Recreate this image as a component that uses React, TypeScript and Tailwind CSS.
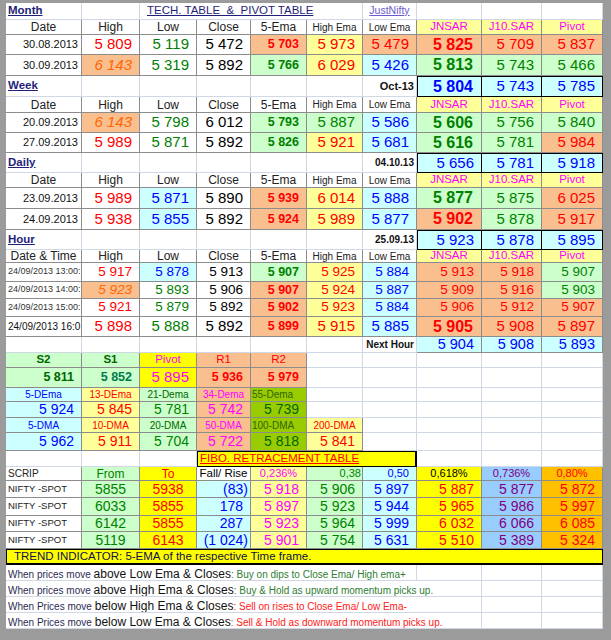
import type { ReactNode } from 'react';
import { twMerge } from 'tailwind-merge';

const COLS = 'grid grid-cols-[76px_58px_57px_54px_56px_56px_54px_65px_60px_61px]';

// borders
const T = 'border-[#8c8c8c]';
const BOX = 'border-black border-t';

// text styles
const NUM = 'justify-end pr-[7px] text-[15px]';
const SM = 'justify-end pr-[7px] text-[13.5px]';
const EMA = 'justify-end pr-[7px] text-[12.5px] font-bold';
const BIG = 'justify-end pr-[8px] text-[16px] font-bold';
const DV = 'justify-end pr-[7px] text-[14px]';
const FV = 'justify-end pr-[7px] text-[14px]';
const FC = 'justify-center text-[14px]';
const HD = 'justify-center text-[12px] text-[#222]';
const HDS = 'justify-center text-[10px] text-[#222]';
const SAR = 'justify-center text-[11.5px] text-[#ff00ff] bg-[#ffff99]';
const DATE = 'justify-end pr-[3px] text-[11px] text-[#111]';
const TIME = 'justify-start pl-[2px] text-[9px] text-[#333]';
const TITLE = 'pl-[2px] text-[11.5px] font-bold underline text-[#1f1f7a]';
const STAMP = 'justify-end pr-[2px] text-[10px] font-bold text-[#111]';
const LAB = 'justify-center text-[11.5px]';
const DL = 'justify-center text-[10px]';
const FH = 'justify-center text-[11px]';
const SPOT = 'justify-start pl-[2px] text-[9.5px] text-[#222]';

// colours
const R = 'text-[#ff0000]';
const GR = 'text-[#008000]';
const DG = 'text-[#006600]';
const BL = 'text-[#0000ff]';
const K = 'text-black';
const OR = 'text-[#ff6600] italic';
const MG = 'text-[#ff00ff]';
const PU = 'text-[#800080]';

const PC = 'bg-[#fabf8f]';
const LG = 'bg-[#ccffcc]';
const LY = 'bg-[#ffff99]';
const CY = 'bg-[#ccffff]';
const YE = 'bg-[#ffff00]';
const OL = 'bg-[#99cc00]';
const LB = 'bg-[#99ccff]';
const GO = 'bg-[#ffc000]';

type Spec = [ReactNode, string];

function Cell({ children, className }: { children?: ReactNode; className?: string }) {
  return (
    <div
      className={twMerge(
        'flex items-center overflow-hidden whitespace-nowrap border-r border-b border-[#d0d7e5] leading-none',
        className
      )}
    >
      {children}
    </div>
  );
}

function Line({ h, cells }: { h: string; cells: Spec[] }) {
  return (
    <div className={twMerge(COLS, h)}>
      {cells.map(([t, c], i) => (
        <Cell key={i} className={c}>
          {t}
        </Cell>
      ))}
    </div>
  );
}

function Header({ h, first }: { h: string; first: string }) {
  return (
    <Line
      h={h}
      cells={[
        [first, `${T} ${HD}`],
        ['High', `${T} ${HD}`],
        ['Low', `${T} ${HD}`],
        ['Close', `${T} ${HD}`],
        ['5-Ema', `${T} ${HD}`],
        ['High Ema', `${T} ${HDS}`],
        ['Low Ema', `${T} ${HDS}`],
        ['JNSAR', `${T} ${SAR}`],
        ['J10.SAR', `${T} ${SAR}`],
        ['Pivot', `${T} ${SAR}`],
      ]}
    />
  );
}

const empty = (n: number): Spec[] => Array.from({ length: n }, () => ['', ''] as Spec);

function Advice({
  lead,
  cond,
  rest,
  tone,
  wide,
}: {
  lead: string;
  cond: string;
  rest: string;
  tone: string;
  wide?: boolean;
}) {
  return (
    <div className={twMerge(COLS, 'h-[16px]')}>
      <Cell className={wide ? 'col-span-8 pl-[2px]' : 'col-span-7 pl-[2px]'}>
        <span>
          <span className="text-[10px] text-[#2b2b55]">{lead} </span>
          <span className="text-[12px] text-[#111]">{cond}</span>
          <span className={`text-[10px] ${tone}`}>{rest}</span>
        </span>
      </Cell>
      {!wide && <Cell />}
      <Cell />
      <Cell />
    </div>
  );
}

export default function App() {
  return (
    <div className="w-[611px] h-[640px] overflow-hidden bg-[#9b9b9b] pl-[6px] pt-[3px] font-['Liberation_Sans',Arial,sans-serif]">
      <div className="w-[597px] bg-white">
        {/* Month */}
        <div className={twMerge(COLS, 'h-[17px]')}>
          <Cell className={TITLE}>Month</Cell>
          <Cell />
          <Cell className="col-span-4 pl-[7px] whitespace-pre text-[11.5px] underline text-[#1f1f7a]">
            {'TECH. TABLE  &  PIVOT TABLE'}
          </Cell>
          <Cell className="justify-center text-[10.5px] underline text-[#6a5acd]">JustNifty</Cell>
          <Cell />
          <Cell />
          <Cell />
        </div>
        <Header h="h-[15px]" first="Date" />
        <Line
          h="h-[20px]"
          cells={[
            ['30.08.2013', `${T} ${DATE}`],
            ['5 809', `${T} ${NUM} ${R}`],
            ['5 119', `${T} ${NUM} ${GR}`],
            ['5 472', `${T} ${NUM} ${K}`],
            ['5 703', `${T} ${EMA} ${R} ${PC}`],
            ['5 973', `${T} ${NUM} ${R} ${LY}`],
            ['5 479', `${T} ${NUM} ${R} ${PC}`],
            ['5 825', `${T} ${BIG} ${R} ${PC}`],
            ['5 709', `${T} ${NUM} ${R} ${PC}`],
            ['5 837', `${T} ${NUM} ${R} ${PC}`],
          ]}
        />
        <Line
          h="h-[21px]"
          cells={[
            ['30.09.2013', `${T} ${DATE}`],
            ['6 143', `${T} ${NUM} ${OR} ${PC}`],
            ['5 319', `${T} ${NUM} ${GR}`],
            ['5 892', `${T} ${NUM} ${K}`],
            ['5 766', `${T} ${EMA} ${GR} ${LG}`],
            ['6 029', `${T} ${NUM} ${R} ${LY}`],
            ['5 426', `${T} ${NUM} ${BL} ${CY}`],
            ['5 813', `${T} ${BIG} ${GR} ${LG}`],
            ['5 743', `${T} ${NUM} ${GR} ${LG}`],
            ['5 466', `${T} ${NUM} ${GR} ${LG}`],
          ]}
        />

        {/* Week */}
        <Line
          h="h-[21px]"
          cells={[
            ['Week', TITLE],
            ...empty(5),
            ['Oct-13', 'justify-end pr-[2px] text-[11px] font-bold text-[#111]'],
            ['5 804', `${BOX} border-l ${BIG} ${BL} ${CY}`],
            ['5 743', `${BOX} ${NUM} ${BL} ${CY}`],
            ['5 785', `${BOX} ${NUM} ${BL} ${CY}`],
          ]}
        />
        <Header h="h-[16px]" first="Date" />
        <Line
          h="h-[20px]"
          cells={[
            ['20.09.2013', `${T} ${DATE}`],
            ['6 143', `${T} ${NUM} ${OR} ${PC}`],
            ['5 798', `${T} ${NUM} ${GR}`],
            ['6 012', `${T} ${NUM} ${K}`],
            ['5 793', `${T} ${EMA} ${GR} ${LG}`],
            ['5 887', `${T} ${NUM} ${GR} ${LG}`],
            ['5 586', `${T} ${NUM} ${BL} ${CY}`],
            ['5 606', `${T} ${BIG} ${GR} ${LG}`],
            ['5 756', `${T} ${NUM} ${GR} ${LG}`],
            ['5 840', `${T} ${NUM} ${GR} ${LG}`],
          ]}
        />
        <Line
          h="h-[20px]"
          cells={[
            ['27.09.2013', `${T} ${DATE}`],
            ['5 989', `${T} ${NUM} ${R}`],
            ['5 871', `${T} ${NUM} ${GR}`],
            ['5 892', `${T} ${NUM} ${K}`],
            ['5 826', `${T} ${EMA} ${GR} ${LG}`],
            ['5 921', `${T} ${NUM} ${R} ${LY}`],
            ['5 681', `${T} ${NUM} ${BL} ${CY}`],
            ['5 616', `${T} ${BIG} ${GR} ${LG}`],
            ['5 781', `${T} ${NUM} ${GR} ${LG}`],
            ['5 984', `${T} ${NUM} ${R} ${PC}`],
          ]}
        />

        {/* Daily */}
        <Line
          h="h-[20px]"
          cells={[
            ['Daily', TITLE],
            ...empty(5),
            ['04.10.13', STAMP],
            ['5 656', `${BOX} border-l ${NUM} ${BL} ${CY}`],
            ['5 781', `${BOX} ${NUM} ${BL} ${CY}`],
            ['5 918', `${BOX} ${NUM} ${BL} ${CY}`],
          ]}
        />
        <Header h="h-[15px]" first="Date" />
        <Line
          h="h-[21px]"
          cells={[
            ['23.09.2013', `${T} ${DATE}`],
            ['5 989', `${T} ${NUM} ${R}`],
            ['5 871', `${T} ${NUM} ${BL} ${CY}`],
            ['5 890', `${T} ${NUM} ${K}`],
            ['5 939', `${T} ${EMA} ${R} ${PC}`],
            ['6 014', `${T} ${NUM} ${R} ${LY}`],
            ['5 888', `${T} ${NUM} ${BL} ${CY}`],
            ['5 877', `${T} ${BIG} ${GR} ${LG}`],
            ['5 875', `${T} ${NUM} ${GR} ${LG}`],
            ['6 025', `${T} ${NUM} ${R} ${PC}`],
          ]}
        />
        <Line
          h="h-[21px]"
          cells={[
            ['24.09.2013', `${T} ${DATE}`],
            ['5 938', `${T} ${NUM} ${R}`],
            ['5 855', `${T} ${NUM} ${BL} ${CY}`],
            ['5 892', `${T} ${NUM} ${K}`],
            ['5 924', `${T} ${EMA} ${R} ${PC}`],
            ['5 989', `${T} ${NUM} ${R} ${LY}`],
            ['5 877', `${T} ${NUM} ${BL} ${CY}`],
            ['5 902', `${T} ${BIG} ${R} ${PC}`],
            ['5 878', `${T} ${NUM} ${GR} ${LG}`],
            ['5 917', `${T} ${NUM} ${R} ${PC}`],
          ]}
        />

        {/* Hour */}
        <Line
          h="h-[20px]"
          cells={[
            ['Hour', TITLE],
            ...empty(5),
            ['25.09.13', STAMP],
            ['5 923', `${BOX} border-l ${NUM} ${BL} ${CY}`],
            ['5 878', `${BOX} ${NUM} ${BL} ${CY}`],
            ['5 895', `${BOX} ${NUM} ${BL} ${CY}`],
          ]}
        />
        <Header h="h-[13px]" first="Date & Time" />
        <Line
          h="h-[19px]"
          cells={[
            ['24/09/2013 13:00:', `${T} ${TIME}`],
            ['5 917', `${T} ${SM} ${R}`],
            ['5 878', `${T} ${SM} ${BL} ${CY}`],
            ['5 913', `${T} ${SM} ${K}`],
            ['5 907', `${T} ${EMA} ${GR} ${LG}`],
            ['5 925', `${T} ${SM} ${R} ${LY}`],
            ['5 884', `${T} ${SM} ${BL} ${CY}`],
            ['5 913', `${T} ${SM} ${R} ${PC}`],
            ['5 918', `${T} ${SM} ${R} ${PC}`],
            ['5 907', `${T} ${SM} ${GR} ${LG}`],
          ]}
        />
        <Line
          h="h-[17px]"
          cells={[
            ['24/09/2013 14:00:', `${T} ${TIME}`],
            ['5 923', `${T} ${SM} ${OR} ${PC}`],
            ['5 893', `${T} ${SM} ${GR}`],
            ['5 906', `${T} ${SM} ${K}`],
            ['5 907', `${T} ${EMA} ${R} ${PC}`],
            ['5 924', `${T} ${SM} ${R} ${LY}`],
            ['5 887', `${T} ${SM} ${BL} ${CY}`],
            ['5 909', `${T} ${SM} ${R} ${PC}`],
            ['5 916', `${T} ${SM} ${R} ${PC}`],
            ['5 903', `${T} ${SM} ${GR} ${LG}`],
          ]}
        />
        <Line
          h="h-[18px]"
          cells={[
            ['24/09/2013 15:00:', `${T} ${TIME}`],
            ['5 921', `${T} ${SM} ${R}`],
            ['5 879', `${T} ${SM} ${GR}`],
            ['5 892', `${T} ${SM} ${K}`],
            ['5 902', `${T} ${EMA} ${R} ${PC}`],
            ['5 923', `${T} ${SM} ${R} ${LY}`],
            ['5 884', `${T} ${SM} ${BL} ${CY}`],
            ['5 906', `${T} ${SM} ${R} ${PC}`],
            ['5 912', `${T} ${SM} ${R} ${PC}`],
            ['5 907', `${T} ${SM} ${R} ${PC}`],
          ]}
        />
        <Line
          h="h-[20px]"
          cells={[
            ['24/09/2013 16:0', `${T} justify-start pl-[2px] text-[10px] text-[#111]`],
            ['5 898', `${T} ${NUM} ${R}`],
            ['5 888', `${T} ${NUM} ${GR}`],
            ['5 892', `${T} ${NUM} ${K}`],
            ['5 899', `${T} ${EMA} ${R} ${PC}`],
            ['5 915', `${T} ${NUM} ${R} ${LY}`],
            ['5 885', `${T} ${NUM} ${BL} ${CY}`],
            ['5 905', `${T} ${BIG} ${R} ${PC}`],
            ['5 908', `${T} ${NUM} ${R} ${PC}`],
            ['5 897', `${T} ${NUM} ${R} ${PC}`],
          ]}
        />
        <Line
          h="h-[16px]"
          cells={[
            ...empty(6),
            ['Next Hour', STAMP],
            ['5 904', `${T} justify-end pr-[7px] text-[14.5px] ${BL} ${CY}`],
            ['5 908', `${T} justify-end pr-[7px] text-[14.5px] ${BL} ${CY}`],
            ['5 893', `${T} justify-end pr-[7px] text-[14.5px] ${BL} ${CY}`],
          ]}
        />

        {/* pivot levels and moving averages */}
        <Line
          h="h-[15px]"
          cells={[
            ['S2', `${T} ${LAB} font-bold ${DG} ${LG}`],
            ['S1', `${T} ${LAB} font-bold ${DG} ${LG}`],
            ['Pivot', `${T} ${LAB} ${MG} ${YE}`],
            ['R1', `${T} ${LAB} ${R} ${PC}`],
            ['R2', `${T} ${LAB} ${R} ${PC}`],
            ...empty(5),
          ]}
        />
        <Line
          h="h-[20px]"
          cells={[
            ['5 811', `${T} ${EMA} ${DG} ${LG}`],
            ['5 852', `${T} ${EMA} text-[#007a4d] ${LG}`],
            ['5 895', `${T} ${NUM} ${MG} ${YE}`],
            ['5 936', `${T} ${EMA} ${R} ${PC}`],
            ['5 979', `${T} ${EMA} ${R} ${PC}`],
            ...empty(5),
          ]}
        />
        <Line
          h="h-[14px]"
          cells={[
            ['5-DEma', `${T} ${DL} ${BL} ${CY}`],
            ['13-DEma', `${T} ${DL} ${R} ${LY}`],
            ['21-Dema', `${T} ${DL} ${DG} ${LG}`],
            ['34-Dema', `${T} ${DL} ${MG} ${PC}`],
            ['55-Dema', `${T} ${DL} justify-start pl-[1px] text-[#336600] ${OL}`],
            ...empty(5),
          ]}
        />
        <Line
          h="h-[16px]"
          cells={[
            ['5 924', `${T} ${DV} ${BL} ${CY}`],
            ['5 845', `${T} ${DV} ${R} ${LY}`],
            ['5 781', `${T} ${DV} ${GR} ${LG}`],
            ['5 742', `${T} ${DV} ${MG} ${PC}`],
            ['5 739', `${T} ${DV} ${DG} ${OL}`],
            ...empty(5),
          ]}
        />
        <Line
          h="h-[15px]"
          cells={[
            ['5-DMA', `${T} ${DL} ${BL} ${CY}`],
            ['10-DMA', `${T} ${DL} ${R} ${LY}`],
            ['20-DMA', `${T} ${DL} ${DG} ${LG}`],
            ['50-DMA', `${T} ${DL} ${MG} ${PC}`],
            ['100-DMA', `${T} ${DL} justify-start pl-[1px] text-[#336600] ${OL}`],
            ['200-DMA', `${T} ${DL} ${R} ${LY}`],
            ...empty(4),
          ]}
        />
        <Line
          h="h-[18px]"
          cells={[
            ['5 962', `${T} ${DV} ${BL} ${CY}`],
            ['5 911', `${T} ${DV} ${R} ${LY}`],
            ['5 704', `${T} ${DV} ${GR} ${LG}`],
            ['5 722', `${T} ${DV} ${MG} ${PC}`],
            ['5 818', `${T} ${DV} ${DG} ${OL}`],
            ['5 841', `${T} ${DV} ${R} ${LY}`],
            ...empty(4),
          ]}
        />

        {/* Fibonacci */}
        <Line
          h="h-[16px]"
          cells={[
            ...empty(3),
            [
              'FIBO. RETRACEMENT TABLE',
              `col-span-4 border border-black border-r-2 pl-[2px] text-[11.5px] underline ${R} ${YE}`,
            ],
            ...empty(3),
          ]}
        />
        <Line
          h="h-[14px]"
          cells={[
            ['SCRIP', `${T} justify-start pl-[2px] text-[10px] text-[#222]`],
            ['From', `${T} justify-center text-[12px] ${GR} ${LG}`],
            ['To', `${T} justify-center text-[12px] ${R} ${YE}`],
            ['Fall/ Rise', `${T} justify-center text-[11.5px] ${K}`],
            ['0,236%', `${T} ${FH} ${MG} ${LY}`],
            ['0,38', `${T} justify-end pr-[1px] text-[11px] ${GR} ${LG}`],
            ['0,50', `${T} justify-end pr-[7px] text-[11px] ${BL} ${CY}`],
            ['0,618%', `${T} ${FH} ${K} ${YE}`],
            ['0,736%', `${T} ${FH} ${PU} ${LB}`],
            ['0,80%', `${T} ${FH} ${R} ${GO}`],
          ]}
        />
        {[
          ['h-[17px]', '5855', '5938', '(83)', '5 918', '5 906', '5 897', '5 887', '5 877', '5 872'],
          ['h-[18px]', '6033', '5855', '178', '5 897', '5 923', '5 944', '5 965', '5 986', '5 997'],
          ['h-[16px]', '6142', '5855', '287', '5 923', '5 964', '5 999', '6 032', '6 066', '6 085'],
          ['h-[17px]', '5119', '6143', '(1 024)', '5 901', '5 754', '5 631', '5 510', '5 389', '5 324'],
        ].map(([h, from, to, fall, a, b, c, d, e, f]) => (
          <Line
            key={from + to}
            h={h}
            cells={[
              ['NIFTY -SPOT', `${T} ${SPOT}`],
              [from, `${T} ${FC} ${GR} ${LG}`],
              [to, `${T} ${FC} ${R} ${YE}`],
              [fall, `${T} justify-end text-[14px] ${fall.startsWith('(') ? 'pr-[2px]' : 'pr-[7px]'} ${BL} ${CY}`],
              [a, `${T} ${FV} ${MG} ${LY}`],
              [b, `${T} ${FV} ${GR} ${LG}`],
              [c, `${T} ${FV} ${BL} ${CY}`],
              [d, `${T} ${FV} ${R} ${YE}`],
              [e, `${T} ${FV} ${PU} ${LB}`],
              [f, `${T} ${FV} ${R} ${GO}`],
            ]}
          />
        ))}

        {/* trend indicator */}
        <div className={twMerge(COLS, 'h-[16px]')}>
          <Cell className={`col-span-10 border-black border-t border-l border-b-2 pl-[7px] text-[11.5px] text-[#10104a] ${YE}`}>
            TREND INDICATOR: 5-EMA of the respective Time frame.
          </Cell>
        </div>
        <Advice
          lead="When prices move"
          cond="above Low Ema & Closes"
          rest=": Buy on dips to Close Ema/ High ema+"
          tone="text-[#2e7d32]"
        />
        <Advice
          lead="When prices move"
          cond="above High Ema & Closes"
          rest=": Buy & Hold as upward momentum picks up."
          tone="text-[#2e7d32]"
          wide
        />
        <Advice
          lead="When Prices move"
          cond="below High Ema & Closes"
          rest=": Sell on rises to Close Ema/ Low Ema-"
          tone="text-[#ff2020]"
          wide
        />
        <Advice
          lead="When Prices move"
          cond="below Low Ema & Closes"
          rest=": Sell & Hold as downward momentum picks up."
          tone="text-[#ff2020]"
          wide
        />
      </div>
    </div>
  );
}
